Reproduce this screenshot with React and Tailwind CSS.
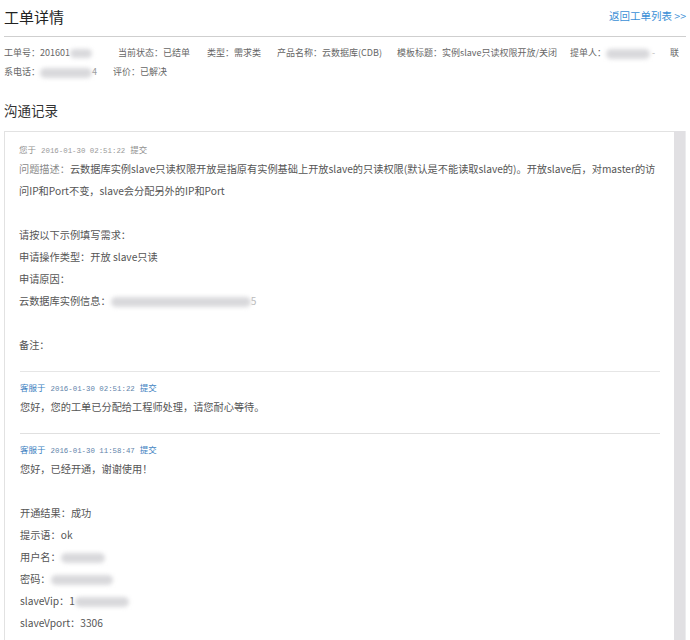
import React from 'react';

const blur = (w, h = 10) => (
    <span
        className="inline-block align-middle rounded-full bg-[#d9d9dc] blur-[2px]"
        style={{ width: w, height: h }}
    />
);

function Stamp({ who, time, staff }) {
    return (
        <div className={`h-[18px] leading-[18px] flex items-baseline text-[8.5px] ${staff ? 'text-[#3d7fbf]' : 'text-[#8f8f8f]'}`}>
            <span>{who}</span>
            <span className={`ml-[5px] mr-[5px] font-['Liberation_Mono',monospace] text-[7.4px] ${staff ? 'text-[#5f84aa]' : 'text-[#999]'}`}>
                {time}
            </span>
            <span>提交</span>
        </div>
    );
}

function Line({ children }) {
    return <div className="h-[22px] leading-[22px] whitespace-nowrap">{children}</div>;
}

export default function App() {
    return (
        <div className="w-[690px] h-[640px] overflow-hidden bg-white text-[#555] font-['Noto_Sans_CJK_SC','Liberation_Sans',sans-serif]">
            {/* header */}
            <div className="ml-[4px] w-[682px] h-[37px] flex items-center justify-between border-b border-[#cfcfcf]">
                <h1 className="text-[15px] text-[#222] mt-[-2px]">工单详情</h1>
                <a href="#" className="text-[10.5px] text-[#3b8fd6] mt-[-5px]">返回工单列表 &gt;&gt;</a>
            </div>

            {/* ticket info */}
            <div className="ml-[4px] pt-[6px] text-[9px] leading-[19px] text-[#666]">
                <div className="flex whitespace-nowrap">
                    <span className="w-[114px]">工单号：201601{blur(22, 9)}</span>
                    <span className="w-[89px]">当前状态：已结单</span>
                    <span className="w-[70px]">类型：需求类</span>
                    <span className="w-[120px]">产品名称：云数据库(CDB)</span>
                    <span className="w-[173px]">模板标题：实例slave只读权限开放/关闭</span>
                    <span className="w-[100px]">提单人：{blur(44, 10)}<span className="ml-[2px] text-[#bbb]">-</span></span>
                    <span>联</span>
                </div>
                <div className="flex whitespace-nowrap">
                    <span className="w-[109px]">系电话：{blur(52, 10)}<span className="text-[#999]">4</span></span>
                    <span>评价：已解决</span>
                </div>
            </div>

            <h2 className="ml-[4px] mt-[19px] h-[20px] leading-[20px] text-[13.5px] text-[#333]">沟通记录</h2>

            {/* conversation box */}
            <div className="ml-[4px] mt-[11px] w-[682px] flex h-[520px]">
                <div className="flex-1 min-w-0 overflow-hidden border-t border-l border-[#e2e2e2] pl-[14px] pr-[14px] pt-[8px] text-[10.2px] text-[#555]">
                    <Stamp who="您于" time="2016-01-30 02:51:22" />
                    <Line><span className="text-[#8a8a8a]">问题描述：</span>云数据库实例slave只读权限开放是指原有实例基础上开放slave的只读权限(默认是不能读取slave的)。开放slave后，对master的访</Line>
                    <Line>问IP和Port不变，slave会分配另外的IP和Port</Line>
                    <Line />
                    <Line>请按以下示例填写需求：</Line>
                    <Line>申请操作类型：开放 slave只读</Line>
                    <Line>申请原因：</Line>
                    <Line>云数据库实例信息：{blur(140, 10)}<span className="text-[#bbb]">5</span></Line>
                    <Line />
                    <Line>备注：</Line>

                    <div className="mt-[15px] ml-[1px] border-t border-[#e6e6e6] pt-[6px]">
                        <Stamp who="客服于" time="2016-01-30 02:51:22" staff />
                        <Line>您好，您的工单已分配给工程师处理，请您耐心等待。</Line>
                    </div>

                    <div className="mt-[15px] ml-[1px] border-t border-[#e0e0e0] pt-[6px]">
                        <Stamp who="客服于" time="2016-01-30 11:58:47" staff />
                        <Line>您好，已经开通，谢谢使用！</Line>
                        <Line />
                        <Line>开通结果：成功</Line>
                        <Line>提示语：ok</Line>
                        <Line>用户名：{blur(44, 10)}</Line>
                        <Line>密码：{blur(62, 10)}</Line>
                        <Line>slaveVip：1{blur(54, 10)}</Line>
                        <Line>slaveVport：3306</Line>
                    </div>
                </div>
                <div className="w-[12px] shrink-0 bg-[#e1e0e3] border-r border-[#ececee]" />
            </div>
        </div>
    );
}
